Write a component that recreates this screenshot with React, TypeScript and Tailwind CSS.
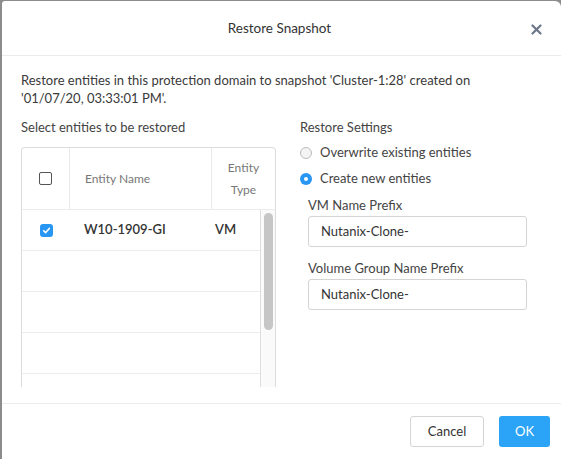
import React from "react";

const font = { fontFamily: "Lato, 'Open Sans', sans-serif" };

function Row({ children }: { children?: React.ReactNode }) {
  return (
    <div className="flex h-[41px] items-center border-b border-[#ececec]">
      {children}
    </div>
  );
}

export default function App() {
  return (
    <div className="w-[561px] h-[459px] bg-[#8c8c8c] pl-[2px] pt-[1px] overflow-hidden" style={font}>
      <div className="w-full h-full bg-white rounded-tl-[3px] rounded-tr-[6px] flex flex-col text-[#333]">
        {/* Header */}
        <div className="h-[55px] shrink-0 border-b border-[#ebebeb] flex items-center justify-center relative">
          <span className="text-[13.5px] text-[#333] mr-[4px]">Restore Snapshot</span>
          <svg className="absolute right-[19px] top-[23px]" width="11" height="11" viewBox="0 0 11 11">
            <path d="M1.5 1.5 L9.5 9.5 M9.5 1.5 L1.5 9.5" stroke="#6b7788" strokeWidth="2.2" strokeLinecap="round" />
          </svg>
        </div>
        {/* Body */}
        <div className="flex-1 px-[19px] pt-[15px] overflow-hidden">
          <p className="text-[13px] leading-[18px] text-[#3a3a3a]">
            Restore entities in this protection domain to snapshot 'Cluster-1:28' created on
            <br />
            '01/07/20, 03:33:01 PM'.
          </p>
          <div className="flex mt-[12px]">
            {/* Left */}
            <div className="w-[255px]">
              <div className="text-[13px] leading-[16px] text-[#444]">Select entities to be restored</div>
              <div className="mt-[12px] h-[240px] border border-[#dcdcdc] rounded-t-[4px] border-b-0 flex flex-col overflow-hidden">
                <div className="h-[62px] shrink-0 flex border-b border-[#ebebeb]">
                  <div className="w-[48px] flex items-center justify-center border-r border-[#ebebeb]">
                    <div className="w-[13px] h-[13px] border border-[#555] rounded-[2px] bg-white" />
                  </div>
                  <div className="w-[142px] flex items-center pl-[15px] text-[12px] text-[#777] border-r border-[#ebebeb]">
                    Entity Name
                  </div>
                  <div className="flex-1 flex flex-col justify-center items-center text-[12px] leading-[22px] text-[#777]">
                    <span>Entity</span>
                    <span>Type</span>
                  </div>
                </div>
                <div className="flex-1 flex">
                  <div className="flex-1">
                    <Row>
                      <div className="w-[48px] flex justify-center">
                        <div className="w-[13px] h-[13px] rounded-[3px] bg-[#2896f3] flex items-center justify-center">
                          <svg width="9" height="9" viewBox="0 0 9 9">
                            <path d="M1.8 4.8 L3.7 6.6 L7.3 2.4" stroke="white" strokeWidth="1.6" fill="none" strokeLinecap="round" strokeLinejoin="round" />
                          </svg>
                        </div>
                      </div>
                      <div className="w-[145px] pl-[14px] text-[13px] font-semibold text-[#333]">W10-1909-GI</div>
                      <div className="text-[13px] font-semibold text-[#333]">VM</div>
                    </Row>
                    <Row />
                    <Row />
                    <Row />
                  </div>
                  <div className="w-[15px] border-l border-[#dedede] bg-[#fafafa] flex justify-center pt-[3px]">
                    <div className="w-[9px] h-[117px] rounded-full bg-[#c6c6c6]" />
                  </div>
                </div>
              </div>
            </div>
            {/* Right */}
            <div className="ml-[24px] flex-1">
              <div className="text-[13px] leading-[16px] text-[#444]">Restore Settings</div>
              <div className="mt-[10px] flex items-center h-[16px]">
                <div className="w-[12px] h-[12px] rounded-full border border-[#bcbcbc] bg-[#f4f4f4]" />
                <span className="ml-[8px] text-[13px] text-[#444]">Overwrite existing entities</span>
              </div>
              <div className="mt-[10px] flex items-center h-[16px]">
                <div className="w-[12px] h-[12px] rounded-full bg-[#2896f3] flex items-center justify-center">
                  <div className="w-[4px] h-[4px] rounded-full bg-white" />
                </div>
                <span className="ml-[8px] text-[13px] text-[#444]">Create new entities</span>
              </div>
              <div className="pl-[8px]">
                <div className="mt-[10px] text-[13px] leading-[16px] text-[#444]">VM Name Prefix</div>
                <div className="mt-[3px] w-[219px] h-[31px] border border-[#d4d4d4] rounded-[3px] flex items-center pl-[12px] text-[13px] text-[#333]">
                  Nutanix-Clone-
                </div>
                <div className="mt-[13px] text-[13px] leading-[16px] text-[#444]">Volume Group Name Prefix</div>
                <div className="mt-[3px] w-[219px] h-[31px] border border-[#d4d4d4] rounded-[3px] flex items-center pl-[12px] text-[13px] text-[#333]">
                  Nutanix-Clone-
                </div>
              </div>
            </div>
          </div>
        </div>
        {/* Footer */}
        <div className="h-[56px] shrink-0 border-t border-[#ebebeb] flex items-center justify-end pr-[11px] gap-[15px]">
          <button className="w-[74px] h-[31px] border border-[#d4d4d4] rounded-[3px] bg-white text-[13px] text-[#333]">
            Cancel
          </button>
          <button className="w-[51px] h-[31px] rounded-[3px] bg-[#2ba3f6] text-[13px] text-white">
            OK
          </button>
        </div>
      </div>
    </div>
  );
}
